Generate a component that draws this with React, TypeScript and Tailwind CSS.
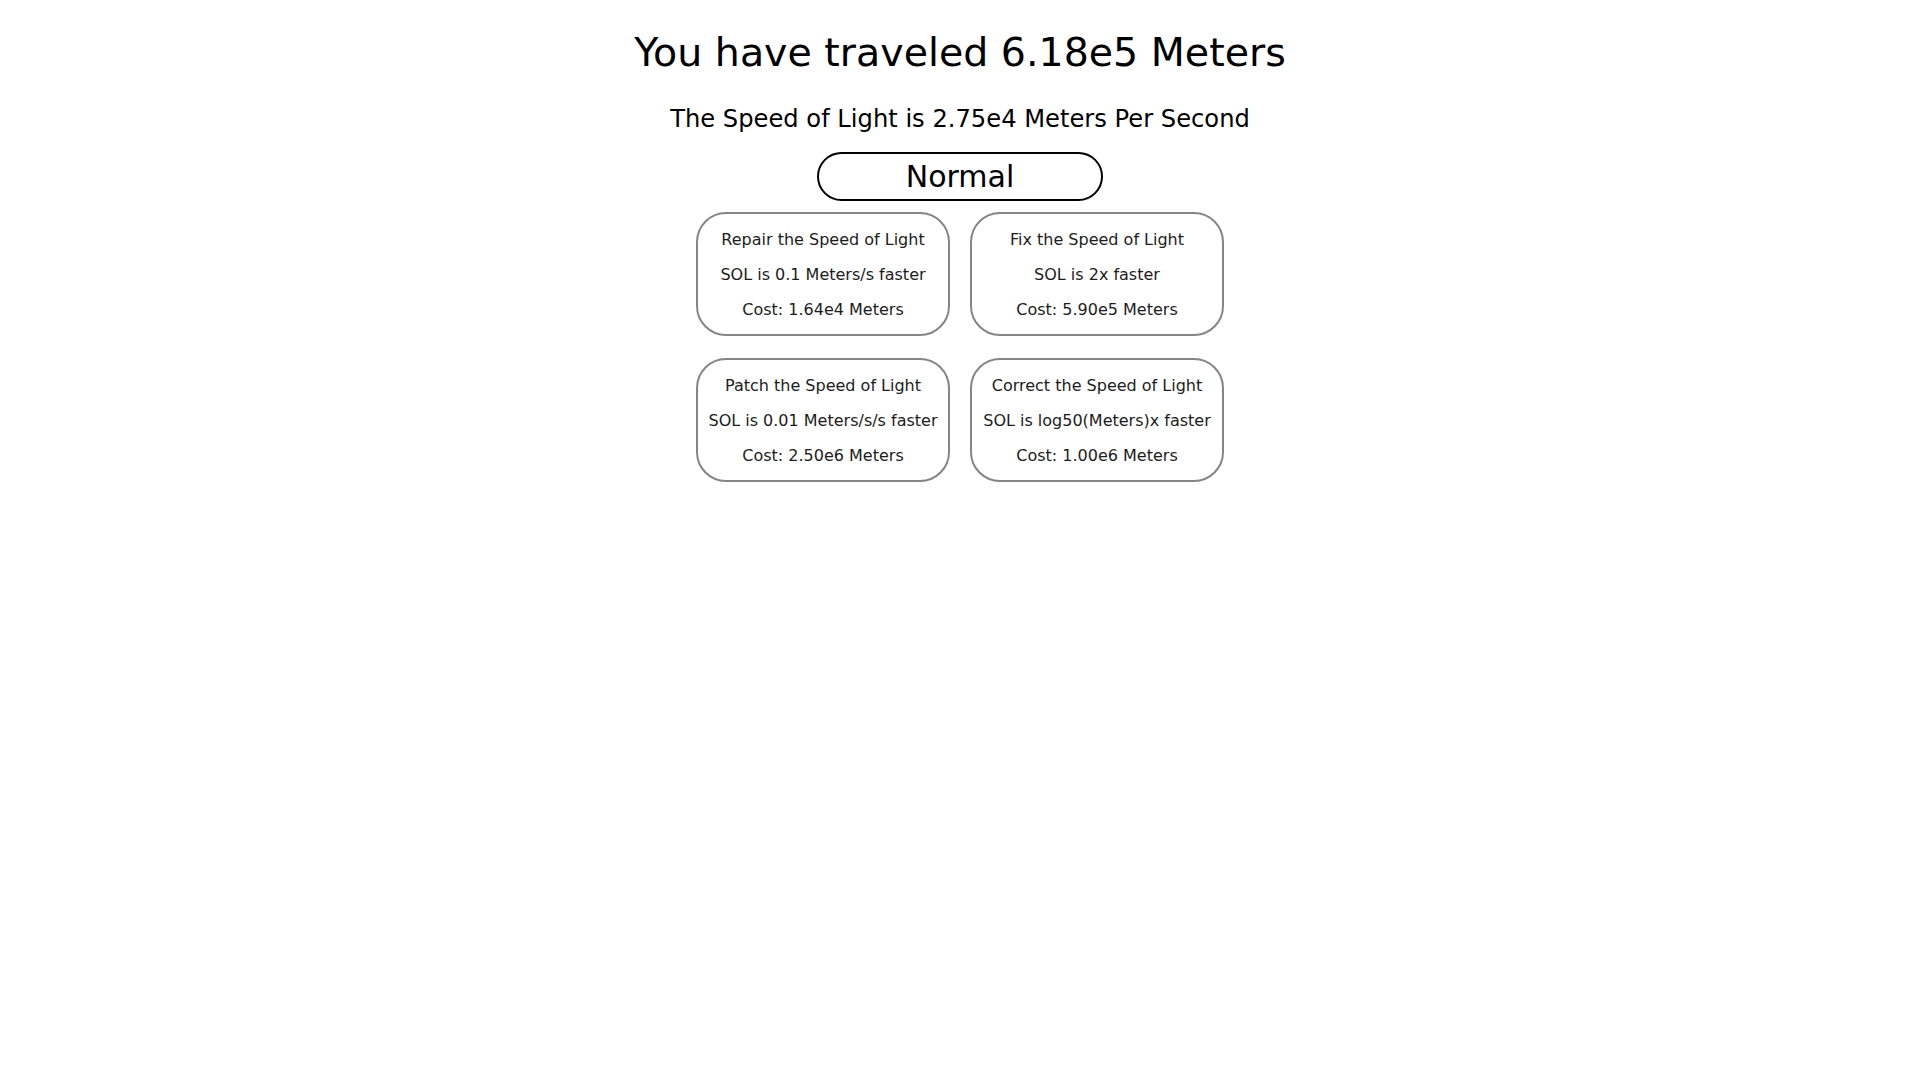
import { useState } from 'react';

type Upgrade = {
  id: string;
  title: string;
  effect: string;
  cost: string;
};

const upgrades: Upgrade[] = [
  { id: 'repair', title: 'Repair the Speed of Light', effect: 'SOL is 0.1 Meters/s faster', cost: 'Cost: 1.64e4 Meters' },
  { id: 'fix', title: 'Fix the Speed of Light', effect: 'SOL is 2x faster', cost: 'Cost: 5.90e5 Meters' },
  { id: 'patch', title: 'Patch the Speed of Light', effect: 'SOL is 0.01 Meters/s/s faster', cost: 'Cost: 2.50e6 Meters' },
  { id: 'correct', title: 'Correct the Speed of Light', effect: 'SOL is log50(Meters)x faster', cost: 'Cost: 1.00e6 Meters' },
];

function UpgradeCard({ upgrade }: { upgrade: Upgrade }) {
  return (
    <button className="flex flex-col items-center gap-4 rounded-[30px] border-2 border-[#858585] bg-white pt-4 pb-[15px] text-[16px] leading-[19px] text-[#1c1c1c]">
      <span>{upgrade.title}</span>
      <span>{upgrade.effect}</span>
      <span>{upgrade.cost}</span>
    </button>
  );
}

export default function App() {
  const [mode, setMode] = useState<'Normal' | 'Fast'>('Normal');

  return (
    <div className="min-h-screen bg-white flex flex-col items-center pt-[28px] font-['DejaVu_Sans',sans-serif] text-black">
      {/* Distance counter */}
      <h1 className="text-[39.5px] leading-[48px] font-normal">You have traveled 6.18e5 Meters</h1>
      <p className="mt-[27px] text-[24.2px] leading-[32px]">The Speed of Light is 2.75e4 Meters Per Second</p>

      {/* Mode toggle */}
      <button
        onClick={() => setMode(mode === 'Normal' ? 'Fast' : 'Normal')}
        className="mt-[17px] flex h-[49px] w-[286px] items-center justify-center rounded-full border-2 border-black text-[30px] leading-[36px]"
      >
        {mode}
      </button>

      {/* Upgrades */}
      <div className="mt-[11px] grid grid-cols-[254px_254px] gap-x-5 gap-y-[22px]">
        {upgrades.map((u) => (
          <UpgradeCard key={u.id} upgrade={u} />
        ))}
      </div>
    </div>
  );
}
